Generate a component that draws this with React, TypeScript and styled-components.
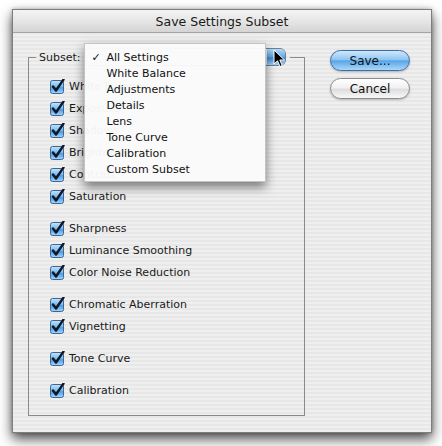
import React from 'react';
import styled, { createGlobalStyle } from 'styled-components';

const GlobalStyle = createGlobalStyle`
    html, body {
        margin: 0;
        padding: 0;
        background: #ffffff;
    }
    body {
        font-family: 'DejaVu Sans', 'Liberation Sans', sans-serif;
        color: #111;
    }
`;

const Page = styled.div`
    width: 442px;
    height: 446px;
    padding: 9px 0 0 12px;
    box-sizing: border-box;
`;

const Window = styled.div`
    width: 420px;
    height: 424px;
    box-sizing: border-box;
    border: 1px solid #7d7d7d;
    display: flex;
    flex-direction: column;
    background: repeating-linear-gradient(
        to bottom,
        #efefef 0px,
        #efefef 2px,
        #e7e7e7 2px,
        #e7e7e7 4px
    );
    box-shadow: 0 6px 12px rgba(0, 0, 0, 0.7), 0 0 4px rgba(0, 0, 0, 0.25);
`;

const TitleBar = styled.div`
    height: 21px;
    flex-shrink: 0;
    border-bottom: 1px solid #a4a4a4;
    background: linear-gradient(to bottom, #f4f4f4 0%, #e6e6e6 50%, #d4d4d4 100%);
    display: flex;
    align-items: center;
    justify-content: center;
    font-size: 12.5px;
    color: #1a1a1a;
    padding-top: 1px;
`;

const Content = styled.div`
    flex: 1;
    display: flex;
    padding: 14px 0 0 15px;
`;

const GroupBox = styled.fieldset`
    margin: 0;
    padding: 0 0 0 21px;
    width: 277px;
    height: 369px;
    box-sizing: border-box;
    border: 1px solid #8a8a8a;
    min-width: 0;
`;

const Legend = styled.legend`
    margin-left: -14px;
    padding: 0 4px 0 3px;
    display: flex;
    align-items: center;
    gap: 5px;
    font-size: 11px;
    height: 20px;
`;

const LegendLabel = styled.span`
    color: #1a1a1a;
`;

const PopupWrap = styled.div`
    position: relative;
    width: 201px;
    height: 18px;
`;

const PopupButton = styled.div`
    height: 18px;
    display: flex;
    border-radius: 4px 6px 6px 4px;
    overflow: hidden;
    border: 1px solid #6f7f95;
    box-sizing: border-box;
`;

const PopupBody = styled.div`
    flex: 1;
    background: linear-gradient(to bottom, #ffffff, #ececec);
`;

const PopupCap = styled.div`
    width: 18px;
    background: linear-gradient(to bottom, #b5dcfa 0%, #5ea9ea 50%, #3e8ad6 55%, #9fd2f7 100%);
`;

const Menu = styled.div`
    position: absolute;
    left: -1px;
    top: -5px;
    width: 180px;
    padding: 5px 0 4px 0;
    background: rgba(250, 250, 250, 0.97);
    border: 1px solid #c4c4c4;
    box-shadow: 0 5px 10px rgba(0, 0, 0, 0.5);
    z-index: 2;
`;

const MenuItem = styled.div`
    height: 16px;
    display: flex;
    align-items: center;
    font-size: 11px;
    color: #111;
`;

const MenuCheck = styled.span`
    width: 21px;
    padding-left: 6px;
    box-sizing: border-box;
    font-size: 11px;
`;

const Cursor = styled.svg`
    position: absolute;
    left: 188px;
    top: 1px;
    z-index: 3;
`;

const CheckList = styled.div`
    display: flex;
    flex-direction: column;
    gap: 10px;
    margin-top: 8px;
`;

const CheckGroup = styled.div`
    display: flex;
    flex-direction: column;
`;

const CheckRow = styled.div`
    height: 22px;
    display: flex;
    align-items: center;
    gap: 4px;
    font-size: 11px;
    color: #1a1a1a;
`;

const ButtonColumn = styled.div`
    display: flex;
    flex-direction: column;
    gap: 7px;
    margin-left: 25px;
    padding-top: 3px;
`;

const PillButton = styled.div<{ $primary?: boolean }>`
    width: 80px;
    height: 21px;
    box-sizing: border-box;
    border-radius: 10.5px;
    display: flex;
    align-items: center;
    justify-content: center;
    font-size: 12px;
    color: #111;
    border: 1px solid ${(p) => (p.$primary ? '#3c6ea6' : '#8c8c8c')};
    background: ${(p) =>
        p.$primary
            ? 'linear-gradient(to bottom, #cfe8fc 0%, #8fc6f2 45%, #5aa5e6 52%, #a7d8fa 100%)'
            : 'linear-gradient(to bottom, #ffffff 0%, #f1f1f1 45%, #dedede 55%, #f8f8f8 100%)'};
    box-shadow: 0 1px 2px rgba(0, 0, 0, 0.25);
`;

const groups: string[][] = [
    ['White Balance', 'Exposure', 'Shadows', 'Brightness', 'Contrast', 'Saturation'],
    ['Sharpness', 'Luminance Smoothing', 'Color Noise Reduction'],
    ['Chromatic Aberration', 'Vignetting'],
    ['Tone Curve'],
    ['Calibration'],
];

const menuItems = [
    'All Settings',
    'White Balance',
    'Adjustments',
    'Details',
    'Lens',
    'Tone Curve',
    'Calibration',
    'Custom Subset',
];

const AquaCheckbox: React.FC = () => (
    <svg width="15" height="15" viewBox="0 0 15 15">
        <defs>
            <linearGradient id="cbfill" x1="0" y1="0" x2="0" y2="1">
                <stop offset="0" stopColor="#c4e3fb" />
                <stop offset="0.45" stopColor="#7dbdf0" />
                <stop offset="0.55" stopColor="#4e9be2" />
                <stop offset="1" stopColor="#a5d6f9" />
            </linearGradient>
        </defs>
        <rect x="0.5" y="1.5" width="13" height="13" rx="2" fill="url(#cbfill)" stroke="#3d6799" />
        <path d="M3 7.5 L6 11.5 L13.5 0.5" fill="none" stroke="#101828" strokeWidth="2.4" strokeLinecap="round" strokeLinejoin="round" />
    </svg>
);

export default function App() {
    return (
        <Page>
            <GlobalStyle />
            <Window>
                <TitleBar>Save Settings Subset</TitleBar>
                <Content>
                    <GroupBox>
                        <Legend>
                            <LegendLabel>Subset:</LegendLabel>
                            <PopupWrap>
                                <PopupButton>
                                    <PopupBody />
                                    <PopupCap />
                                </PopupButton>
                                <Menu>
                                    {menuItems.map((item, i) => (
                                        <MenuItem key={item}>
                                            <MenuCheck>{i === 0 ? '✓' : ''}</MenuCheck>
                                            {item}
                                        </MenuItem>
                                    ))}
                                </Menu>
                                <Cursor width="13" height="20" viewBox="0 0 13 20">
                                    <path
                                        d="M1 1 L1 15 L4.5 11.8 L7 17.5 L9.2 16.5 L6.8 11 L11.5 11 Z"
                                        fill="#000"
                                        stroke="#fff"
                                        strokeWidth="1"
                                        strokeLinejoin="round"
                                    />
                                </Cursor>
                            </PopupWrap>
                        </Legend>
                        <CheckList>
                            {groups.map((group, gi) => (
                                <CheckGroup key={gi}>
                                    {group.map((label) => (
                                        <CheckRow key={label}>
                                            <AquaCheckbox />
                                            {label}
                                        </CheckRow>
                                    ))}
                                </CheckGroup>
                            ))}
                        </CheckList>
                    </GroupBox>
                    <ButtonColumn>
                        <PillButton $primary>Save...</PillButton>
                        <PillButton>Cancel</PillButton>
                    </ButtonColumn>
                </Content>
            </Window>
        </Page>
    );
}
